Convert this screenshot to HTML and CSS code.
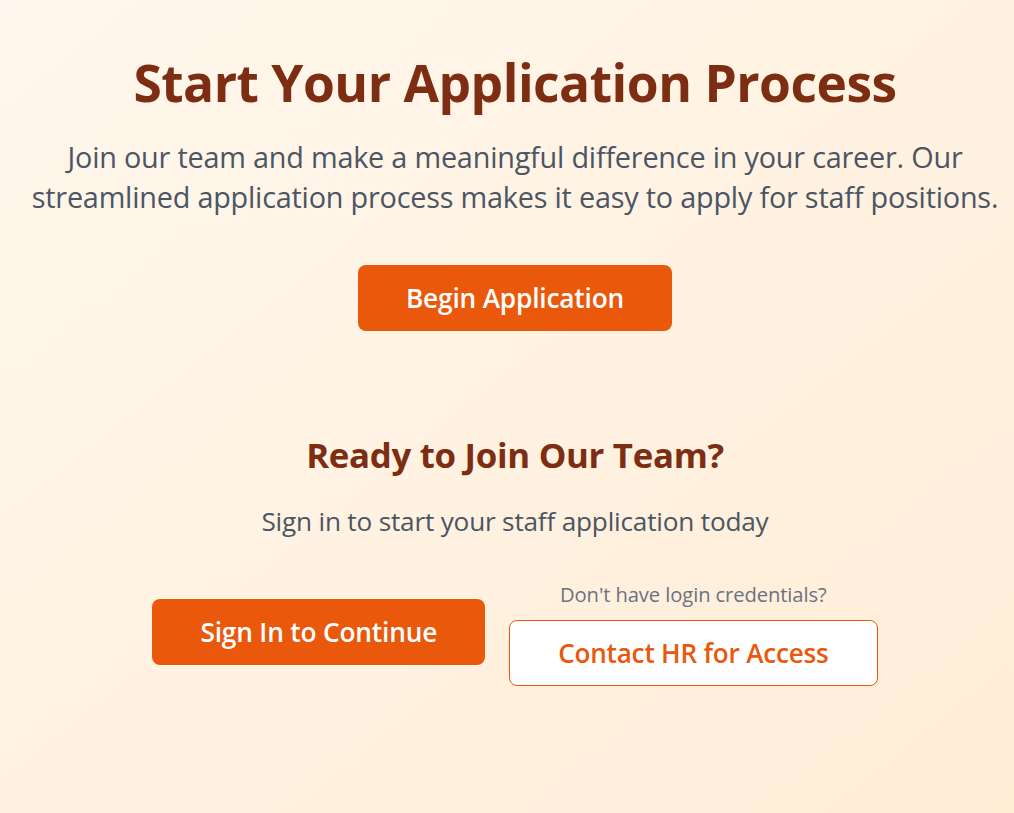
FILE: index.html
```html
<!DOCTYPE html>
<html lang="en">
<head>
<meta charset="utf-8">
<title>Start Your Application Process</title>
<link rel="stylesheet" href="styles.css">
</head>
<body>
<main class="page">
  <section class="hero">
    <h1 class="hero-title">Start Your Application Process</h1>
    <p class="hero-text">Join our team and make a meaningful difference in your career. Our streamlined application process makes it easy to apply for staff positions.</p>
    <a class="btn btn-solid btn-begin" href="#">Begin Application</a>
  </section>
  <section class="join">
    <h2 class="join-title">Ready to Join Our Team?</h2>
    <p class="join-text">Sign in to start your staff application today</p>
    <div class="actions">
      <a class="btn btn-solid btn-signin" href="#">Sign In to Continue</a>
      <div class="contact">
        <span class="contact-note">Don't have login credentials?</span>
        <a class="btn btn-outline" href="#">Contact HR for Access</a>
      </div>
    </div>
  </section>
</main>
</body>
</html>
```
FILE: styles.css
```css
* { box-sizing: border-box; }
html, body { height: 100%; }
body {
  margin: 0;
  font-family: "Open Sans", "Noto Sans", Arial, sans-serif;
  background: linear-gradient(to bottom right, #fff7ed, #ffedd6);
  min-height: 813px;
}
.page {
  padding: 52px 8px 0 24px;
  display: flex;
  flex-direction: column;
  align-items: center;
  text-align: center;
}
.hero {
  display: flex;
  flex-direction: column;
  align-items: center;
}
.hero-title {
  margin: 0;
  font-size: 51.5px;
  line-height: 60px;
  font-weight: 700;
  color: #7c2d12;
  letter-spacing: -0.5px;
}
.hero-text {
  margin: 25px 0 0;
  font-size: 28.8px;
  line-height: 40px;
  color: #4b5563;
  letter-spacing: -0.2px;
}
.btn {
  display: inline-flex;
  align-items: center;
  justify-content: center;
  height: 66px;
  padding: 0 48px;
  border-radius: 8px;
  text-decoration: none;
  font-weight: 600;
  font-size: 26.3px;
  letter-spacing: -0.2px;
}
.btn-solid {
  background: #ea580c;
  color: #ffffff;
}
.btn-outline {
  background: #ffffff;
  color: #ea580c;
  border: 1px solid #ea580c;
  font-size: 26.1px;
}
.btn-begin { margin-top: 48px; }
.btn-signin { margin-bottom: 4px; }
.join {
  margin-top: 101px;
  display: flex;
  flex-direction: column;
  align-items: center;
}
.join-title {
  margin: 0;
  font-size: 34.8px;
  line-height: 45px;
  font-weight: 700;
  color: #7c2d12;
  letter-spacing: -0.3px;
}
.join-text {
  margin: 27px 0 0;
  font-size: 26.2px;
  line-height: 35px;
  color: #4b5563;
  letter-spacing: -0.2px;
}
.actions {
  margin-top: 43px;
  display: flex;
  align-items: center;
  gap: 24px;
}
.contact {
  display: flex;
  flex-direction: column;
  align-items: center;
  gap: 13px;
}
.contact-note {
  font-size: 20.2px;
  line-height: 25px;
  color: #6b7280;
  letter-spacing: -0.1px;
}
```
